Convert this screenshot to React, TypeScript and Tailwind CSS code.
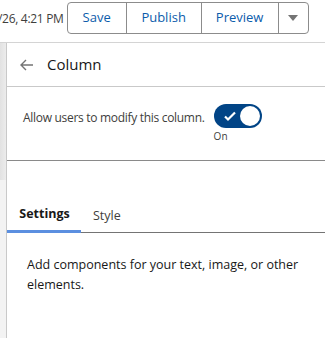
import React, { useState } from 'react';

const font = "font-['Open_Sans','Noto_Sans',sans-serif]";

export default function App() {
  const [enabled, setEnabled] = useState(true);
  const [tab, setTab] = useState<'settings' | 'style'>('settings');

  return (
    <div className={`w-[325px] h-[338px] bg-white overflow-hidden flex flex-col ${font}`}>
      {/* Top toolbar */}
      <div className="h-[43px] shrink-0 flex items-start border-b border-[#d4d4d4]">
        <span className="mt-[10px] ml-[-2px] text-[12px] tracking-[-0.3px] text-[#3e3e3c] whitespace-nowrap">/26, 4:21 PM</span>
        <div className="ml-[3px] mt-[2px] h-[32px] flex border border-[#8c8c8c] rounded-[4px] text-[13px] text-[#0b5cab]">
          <button className="w-[58px] flex items-center justify-center">Save</button>
          <button className="w-[75px] flex items-center justify-center border-l border-[#8c8c8c]">Publish</button>
          <button className="w-[77px] flex items-center justify-center border-l border-[#8c8c8c]">Preview</button>
          <button className="w-[30px] flex items-center justify-center border-l border-[#8c8c8c]">
            <svg width="10" height="6" viewBox="0 0 10 6">
              <path d="M0 0h10L5 6z" fill="#747474" />
            </svg>
          </button>
        </div>
      </div>

      <div className="flex flex-1 min-h-0">
        {/* Left gutter */}
        <div className="w-[6px] shrink-0 flex flex-col">
          <div className="h-[137px] bg-gradient-to-r from-[#e2e2e2] to-[#ececec]" />
          <div className="flex-1 bg-[#f3f3f3]" />
        </div>

        <div className="flex-1 flex flex-col border-l border-[#c9c9c9]">
          {/* Panel header */}
          <div className="h-[44px] shrink-0 flex items-center border-b border-[#c9c9c9] pl-[13px]">
            <svg width="14" height="12" viewBox="0 0 14 12" className="mt-[1px]">
              <path d="M6 1L1 6l5 5M1 6h12" fill="none" stroke="#747474" strokeWidth="1.4" />
            </svg>
            <span className="ml-[13px] text-[15px] text-[#181818]">Column</span>
          </div>

          {/* Toggle row */}
          <div className="h-[74px] shrink-0 border-b border-[#8a8a8a] pl-[16px] pt-[17px] flex items-start">
            <span className="mt-[5px] text-[12px] tracking-[-0.3px] text-[#3e3e3c] whitespace-nowrap">Allow users to modify this column.</span>
            <div className="ml-[9px] flex flex-col items-start">
              <button
                onClick={() => setEnabled(!enabled)}
                className={`w-[48px] h-[24px] rounded-full flex items-center justify-between px-[2px] ${enabled ? 'bg-[#014486]' : 'bg-[#c9c9c9]'}`}
              >
                <svg width="14" height="12" viewBox="0 0 14 12" className="ml-[7px]">
                  <path d="M2 6.5l3 3 7-7" fill="none" stroke="#fff" strokeWidth="2.2" />
                </svg>
                <span className="w-[20px] h-[20px] rounded-full bg-white" />
              </button>
              <span className="mt-[1px] text-[10px] text-[#3e3e3c]">On</span>
            </div>
          </div>

          {/* Tabs */}
          <div className="mt-[37px] h-[35px] shrink-0 flex items-end border-b border-[#747474]">
            <button
              onClick={() => setTab('settings')}
              className={`w-[74px] h-[34px] mb-[-1px] text-[12.5px] pl-[1px] ${tab === 'settings' ? 'font-bold text-[#181818] border-b-[3px] border-[#5b8fe0]' : 'text-[#3e3e3c]'}`}
            >
              Settings
            </button>
            <button
              onClick={() => setTab('style')}
              className={`ml-[12px] h-[34px] mb-[-1px] text-[12.5px] ${tab === 'style' ? 'font-bold text-[#181818] border-b-[3px] border-[#5b8fe0]' : 'text-[#3e3e3c]'}`}
            >
              Style
            </button>
          </div>

          <p className="mt-[22px] pl-[20px] pr-[10px] text-[12.5px] leading-[20px] text-[#181818]">
            Add components for your text, image, or other elements.
          </p>
        </div>
      </div>
    </div>
  );
}
